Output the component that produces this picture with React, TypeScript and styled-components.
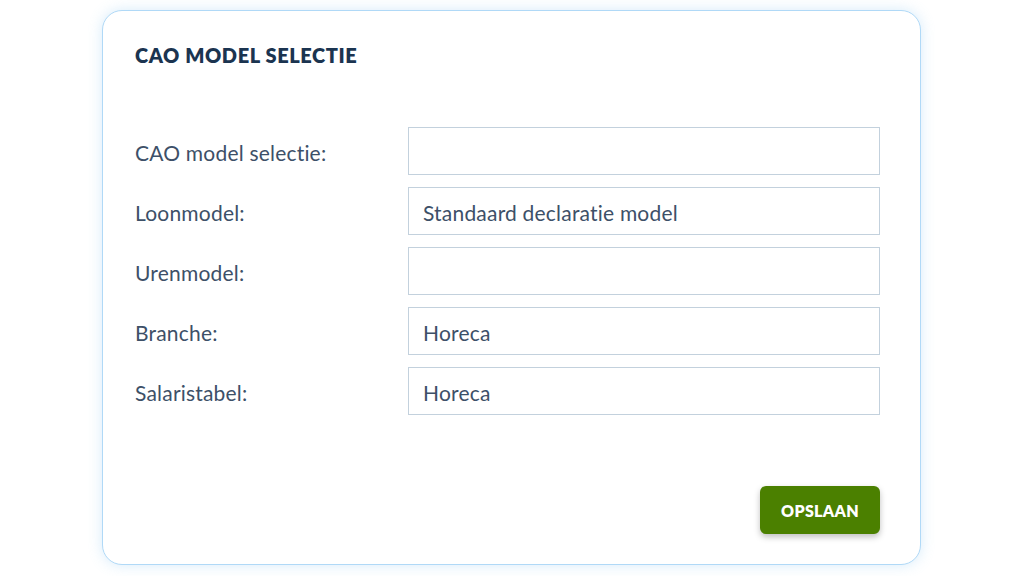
import styled, { createGlobalStyle } from 'styled-components';

const Global = createGlobalStyle`
  html, body {
    margin: 0;
    padding: 0;
    background: #ffffff;
    font-family: Lato, "Open Sans", "Noto Sans", sans-serif;
    font-variant-ligatures: none;
  }
`;

const Page = styled.div`
  width: 1024px;
  height: 576px;
  padding: 10px 0 0 102px;
  box-sizing: border-box;
`;

const Card = styled.section`
  width: 819px;
  height: 555px;
  box-sizing: border-box;
  padding: 32px 40px 30px 32px;
  background: #ffffff;
  border: 1px solid #b0d9f7;
  border-radius: 20px;
  box-shadow: 0 0 14px rgba(120, 190, 240, 0.3);
  display: flex;
  flex-direction: column;
`;

const Title = styled.h2`
  margin: 0;
  font-size: 20px;
  line-height: 24px;
  font-weight: 800;
  color: #1b3450;
  letter-spacing: 0.6px;
`;

const Form = styled.div`
  margin-top: 60px;
  display: grid;
  grid-template-columns: 273px 1fr;
  row-gap: 12px;
  align-items: center;
`;

const Label = styled.label`
  font-size: 21px;
  letter-spacing: 0.2px;
  color: #3d5068;
  padding-top: 2px;
`;

const Field = styled.div`
  height: 48px;
  box-sizing: border-box;
  border: 1px solid #c3d1dd;
  padding: 2px 14px 0;
  display: flex;
  align-items: center;
  font-size: 21px;
  letter-spacing: 0.2px;
  color: #3d5068;
`;

const Footer = styled.div`
  margin-top: auto;
  display: flex;
  justify-content: flex-end;
`;

const Button = styled.button`
  width: 120px;
  height: 48px;
  border: none;
  border-radius: 6px;
  background: #4b8000;
  color: #ffffff;
  font-family: inherit;
  font-size: 16px;
  font-weight: 800;
  letter-spacing: 0.3px;
  box-shadow: 0 3px 6px rgba(0, 0, 0, 0.25);
  cursor: pointer;
`;

const rows = [
  { label: 'CAO model selectie:', value: '' },
  { label: 'Loonmodel:', value: 'Standaard declaratie model' },
  { label: 'Urenmodel:', value: '' },
  { label: 'Branche:', value: 'Horeca' },
  { label: 'Salaristabel:', value: 'Horeca' },
];

export default function App() {
  return (
    <>
      <Global />
      <Page>
        <Card>
          <Title>CAO MODEL SELECTIE</Title>
          <Form>
            {rows.map((r) => (
              <>
                <Label key={r.label + 'l'}>{r.label}</Label>
                <Field key={r.label + 'f'}>{r.value}</Field>
              </>
            ))}
          </Form>
          <Footer>
            <Button>OPSLAAN</Button>
          </Footer>
        </Card>
      </Page>
    </>
  );
}
